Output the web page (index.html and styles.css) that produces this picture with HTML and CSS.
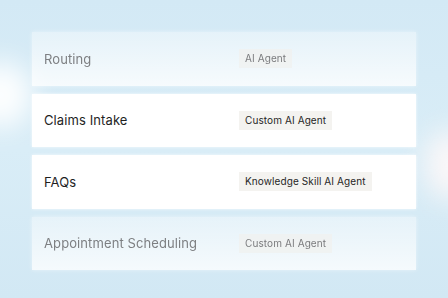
FILE: index.html
```html
<!DOCTYPE html>
<html lang="en">
<head>
<meta charset="utf-8">
<title>Agents</title>
<link rel="stylesheet" href="styles.css">
</head>
<body>
<div class="stage">
  <div class="glow glow-left"></div>
  <div class="glow glow-right"></div>
  <div class="list">
    <div class="row faded">
      <span class="name">Routing</span>
      <span class="badge">AI Agent</span>
    </div>
    <div class="row">
      <span class="name">Claims Intake</span>
      <span class="badge">Custom AI Agent</span>
    </div>
    <div class="row">
      <span class="name">FAQs</span>
      <span class="badge">Knowledge Skill AI Agent</span>
    </div>
    <div class="row faded">
      <span class="name">Appointment Scheduling</span>
      <span class="badge">Custom AI Agent</span>
    </div>
  </div>
</div>
</body>
</html>
```
FILE: styles.css
```css
html, body {
  margin: 0;
  padding: 0;
}
body {
  width: 448px;
  height: 298px;
  overflow: hidden;
  background: #d5eaf5;
  font-family: Inter, "Noto Sans", sans-serif;
}
.stage {
  position: relative;
  width: 448px;
  height: 298px;
  overflow: hidden;
  background: linear-gradient(180deg, #d3e9f5 0%, #d9edf7 50%, #d2e8f4 100%);
}
.glow {
  position: absolute;
  border-radius: 50%;
  filter: blur(14px);
}
.glow-left {
  left: -30px;
  top: 62px;
  width: 62px;
  height: 66px;
  background: rgba(255, 255, 255, 0.95);
}
.glow-right {
  left: 425px;
  top: 130px;
  width: 50px;
  height: 70px;
  background: rgba(255, 248, 248, 0.9);
}
.list {
  position: relative;
  padding: 32px 0 0 32px;
  width: 384px;
  display: flex;
  flex-direction: column;
  gap: 8px;
}
.row {
  height: 53.5px;
  box-sizing: border-box;
  padding-left: 12px;
  display: grid;
  grid-template-columns: 195px auto;
  justify-content: start;
  align-items: center;
  background: #ffffff;
  box-shadow: 0 0 3px rgba(255, 255, 255, 0.8);
}
.name {
  font-size: 13px;
  color: #1f1f1f;
  letter-spacing: 0.1px;
}
.badge {
  display: inline-block;
  justify-self: start;
  height: 19px;
  line-height: 19px;
  padding: 0 6px;
  font-size: 10px;
  color: #262626;
  background: #f4f3f0;
  letter-spacing: 0.1px;
}
.faded {
  background: linear-gradient(180deg, rgba(255, 255, 255, 0.4) 0%, rgba(255, 255, 255, 0.78) 100%);
  box-shadow: 0 0 4px rgba(255, 255, 255, 0.5);
}
.faded .name {
  color: #7d7f82;
  filter: blur(0.3px);
}
.faded .badge {
  color: #7a7b7d;
  background: rgba(240, 241, 240, 0.8);
  filter: blur(0.3px);
}
```
